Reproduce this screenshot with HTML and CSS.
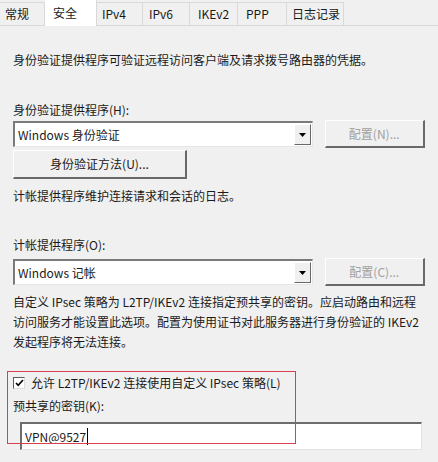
FILE: index.html
```html
<!DOCTYPE html>
<html lang="zh-CN">

<head>
    <meta charset="UTF-8">
    <title>属性 - 安全</title>
    <link rel="stylesheet" href="styles.css">
</head>

<body>
    <div class="tabs">
        <div class="tab first">常规</div>
        <div class="tab active">安全</div>
        <div class="tab ipv4">IPv4</div>
        <div class="tab ipv6">IPv6</div>
        <div class="tab ikev2">IKEv2</div>
        <div class="tab ppp">PPP</div>
        <div class="tab logs">日志记录</div>
    </div>

    <div class="panel">
        <p class="intro">身份验证提供程序可验证远程访问客户端及请求拨号路由器的凭据。</p>

        <p class="label auth-label">身份验证提供程序(H):</p>
        <div class="combo-row">
            <div class="combo">
                <span class="combo-text">Windows 身份验证</span>
                <span class="drop"><svg width="7" height="4" viewBox="0 0 7 4"><path d="M0 0h7L3.5 4z" fill="#000"/></svg></span>
            </div>
            <button class="btn config" disabled>配置(N)...</button>
        </div>
        <button class="btn method">身份验证方法(U)...</button>

        <p class="note">计帐提供程序维护连接请求和会话的日志。</p>

        <p class="label acct-label">计帐提供程序(O):</p>
        <div class="combo-row acct-row">
            <div class="combo">
                <span class="combo-text">Windows 记帐</span>
                <span class="drop"><svg width="7" height="4" viewBox="0 0 7 4"><path d="M0 0h7L3.5 4z" fill="#000"/></svg></span>
            </div>
            <button class="btn config" disabled>配置(C)...</button>
        </div>

        <p class="para">自定义 IPsec 策略为 L2TP/IKEv2 连接指定预共享的密钥。应启动路由和远程<br>访问服务才能设置此选项。配置为使用证书对此服务器进行身份验证的 IKEv2<br>发起程序将无法连接。</p>

        <label class="check-row">
            <span class="checkbox"><svg width="9" height="8" viewBox="0 0 9 8"><path d="M1 4l2.2 2.4L8 1" fill="none" stroke="#000" stroke-width="1.6"/></svg></span>
            允许 L2TP/IKEv2 连接使用自定义 IPsec 策略(L)
        </label>
        <p class="label key-label">预共享的密钥(K):</p>
        <div class="edit"><span class="caret">VPN@9527</span></div>
    </div>

    <div class="highlight"></div>
</body>

</html>
```

FILE: styles.css
```css
* {
    margin: 0;
    padding: 0;
    box-sizing: border-box;
}

body {
    width: 438px;
    height: 462px;
    overflow: hidden;
    position: relative;
    background: #f0f0f0;
    color: #1a1a1a;
    font: 12px/20px "Noto Sans CJK SC", sans-serif;
}

/* tab strip */
.tabs {
    display: flex;
    align-items: flex-end;
    height: 26px;
    border-bottom: 1px solid #d9d9d9;
}

.tab {
    height: 23px;
    line-height: 22px;
    padding-left: 8px;
    border-top: 1px solid #d9d9d9;
    border-right: 1px solid #d9d9d9;
    background: #f0f0f0;
    white-space: nowrap;
}

.tab.first {
    width: 45px;
    padding-left: 5px;
}

.tab.active {
    width: 52px;
    height: 26px;
    margin-bottom: -1px;
    padding-top: 2px;
    background: #fff;
    border-top: none;
}

.ipv4 { width: 46px; padding-left: 5px; }
.ipv6 { width: 47px; padding-left: 6px; }
.ikev2 { width: 48px; }
.ppp { width: 49px; }
.logs { width: 57px; padding-left: 5px; }

/* page body */
.panel {
    padding: 0 13px;
}

.intro {
    margin-top: 24px;
}

.auth-label {
    margin-top: 30px;
}

.combo-row {
    display: flex;
    align-items: center;
    gap: 12px;
    height: 28px;
}

.combo {
    width: 301px;
    height: 26px;
    display: flex;
    align-items: center;
    justify-content: space-between;
    background: #fff;
    border-top: 2px solid #7a7a7a;
    border-left: 2px solid #7a7a7a;
    border-right: 1px solid #e6e6e6;
    border-bottom: 1px solid #e6e6e6;
    padding: 0 1px 0 3px;
}

.combo-text {
    white-space: nowrap;
}

.drop {
    width: 17px;
    height: 21px;
    display: flex;
    align-items: center;
    justify-content: center;
    background: #f0f0f0;
    border-top: 1px solid #fff;
    border-left: 1px solid #fff;
    border-right: 1px solid #696969;
    border-bottom: 1px solid #696969;
}

.btn {
    font: inherit;
    color: #1a1a1a;
    background: #f0f0f0;
    border-top: 1px solid #fff;
    border-left: 1px solid #fff;
    border-right: 2px solid #696969;
    border-bottom: 2px solid #696969;
    outline: none;
}

.btn:disabled {
    color: #a0a0a0;
}

.config {
    width: 101px;
    height: 28px;
}

.method {
    display: block;
    width: 174px;
    height: 29px;
    margin-top: 2px;
}

.note {
    margin-top: 7px;
}

.acct-label {
    margin-top: 29px;
}

.acct-row {
    margin-top: 3px;
}

.para {
    margin-top: 6px;
    white-space: nowrap;
}

.check-row {
    display: flex;
    align-items: center;
    gap: 6px;
    margin-top: 21px;
    height: 20px;
}

.checkbox {
    width: 12px;
    height: 12px;
    display: flex;
    align-items: center;
    justify-content: center;
    background: #fff;
    border-top: 1px solid #5a5a5a;
    border-left: 1px solid #5a5a5a;
    border-right: 1px solid #dcdcdc;
    border-bottom: 1px solid #dcdcdc;
}

.key-label {
    margin-top: 3px;
}

.edit {
    width: 402px;
    height: 28px;
    margin: 6px 0 0 7px;
    padding-left: 3px;
    line-height: 25px;
    background: #fff;
    border-top: 2px solid #6d6d6d;
    border-left: 2px solid #6d6d6d;
    border-right: 1px solid #e3e3e3;
    border-bottom: 1px solid #e3e3e3;
}

.caret {
    border-right: 1px solid #000;
    padding-right: 1px;
}

/* red annotation box drawn over the dialog */
.highlight {
    position: absolute;
    left: 7px;
    top: 371px;
    width: 289px;
    height: 73px;
    border: 1px solid #d8404e;
}
```
